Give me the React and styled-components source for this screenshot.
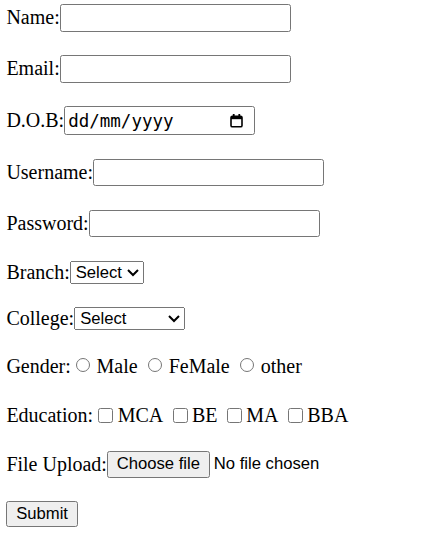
import React from "react";
import styled, { createGlobalStyle } from "styled-components";

const GlobalStyle = createGlobalStyle`
  html, body { margin: 0; padding: 0; background: #fff; }
  body { font-family: "Liberation Serif", "Times New Roman", serif; color: #000; }
`;

const Form = styled.form`
  zoom: 1.25;
  display: flex;
  flex-direction: column;
  align-items: flex-start;
  gap: 18.8px;
  padding: 3.2px 0 0 5.1px;
  font-size: 16px;
`;

const Row = styled.div`
  display: flex;
  align-items: center;
  min-height: ${(p) => p.$minH || 0}px;
  white-space: nowrap;
`;

const Label = styled.span``;

const controlFont = `
  font-family: "Liberation Sans", Arial, sans-serif;
  font-size: 13.333px;
`;

const TextInput = styled.input`
  ${controlFont}
  box-sizing: border-box;
  width: 184.8px;
  height: 22px;
  margin: 0;
  padding: 1px 2px;
  border: 1px solid #767676;
  border-radius: 2px;
  background: #fff;
`;

const DateBox = styled.div`
  box-sizing: border-box;
  width: 152.8px;
  height: 23.2px;
  display: flex;
  align-items: center;
  justify-content: space-between;
  padding: 0 8.4px 0 2.4px;
  border: 1px solid #767676;
  border-radius: 2px;
  background: #fff;
  font-family: "DejaVu Sans Mono", "Liberation Mono", monospace;
  font-size: 14px;
  color: #000;
`;

const CalendarIcon = styled.svg`
  width: 12px;
  height: 12px;
  display: block;
`;

const Select = styled.select`
  ${controlFont}
  margin: 0;
  color: #000;
  ${(p) => (p.$w ? `width: ${p.$w}px;` : "")}
`;

const Choice = styled.label`
  display: inline-flex;
  align-items: center;
  margin-right: ${(p) => p.$after || 0}px;
`;

const Radio = styled.input`
  appearance: none;
  box-sizing: border-box;
  width: 11.4px;
  height: 11.4px;
  margin: 0 5px 3px 4.2px;
  border: 1px solid #767676;
  border-radius: 50%;
  background: #fff;
`;

const Check = styled.input`
  appearance: none;
  box-sizing: border-box;
  width: 12px;
  height: 12px;
  margin: 0 3.5px 0 4.2px;
  border: 1px solid #767676;
  border-radius: 2px;
  background: #fff;
`;

const Button = styled.button`
  ${controlFont}
  margin: 0;
  padding: 0 7px;
  height: ${(p) => p.$h || 20.8}px;
  border: 1px solid #767676;
  border-radius: 2px;
  background: #efefef;
  color: #000;
`;

const FileStatus = styled.span`
  ${controlFont}
  margin-left: 3.2px;
`;

function Calendar() {
  return (
    <CalendarIcon viewBox="0 0 15 15" aria-hidden="true">
      <rect x="2" y="3.2" width="11" height="10.6" rx="1.4" fill="none" stroke="#000" strokeWidth="1.6" />
      <rect x="2" y="3.2" width="11" height="3" fill="#000" />
      <rect x="3.8" y="1" width="1.8" height="3" fill="#000" />
      <rect x="9.4" y="1" width="1.8" height="3" fill="#000" />
    </CalendarIcon>
  );
}

export default function App() {
  return (
    <>
      <GlobalStyle />
      <Form onSubmit={(e) => e.preventDefault()}>
        <Row>
          <Label>Name:</Label>
          <TextInput type="text" />
        </Row>
        <Row>
          <Label>Email:</Label>
          <TextInput type="email" />
        </Row>
        <Row>
          <Label>D.O.B:</Label>
          <DateBox>
            <span>dd/mm/yyyy</span>
            <Calendar />
          </DateBox>
        </Row>
        <Row>
          <Label>Username:</Label>
          <TextInput type="text" />
        </Row>
        <Row>
          <Label>Password:</Label>
          <TextInput type="password" />
        </Row>
        <Row>
          <Label>Branch:</Label>
          <Select defaultValue="">
            <option value="">Select</option>
            <option>CSE</option>
            <option>IT</option>
          </Select>
        </Row>
        <Row>
          <Label>College:</Label>
          <Select $w={88.8} defaultValue="">
            <option value="">Select</option>
            <option>College A</option>
          </Select>
        </Row>
        <Row $minH={20.8}>
          <Label>Gender:</Label>
          <Choice $after={4.2}>
            <Radio type="radio" name="gender" />
            Male
          </Choice>
          <Choice $after={4.2}>
            <Radio type="radio" name="gender" />
            FeMale
          </Choice>
          <Choice>
            <Radio type="radio" name="gender" />
            other
          </Choice>
        </Row>
        <Row $minH={19.2}>
          <Label>Education:</Label>
          <Choice $after={3.3}>
            <Check type="checkbox" />
            MCA
          </Choice>
          <Choice $after={3.3}>
            <Check type="checkbox" />
            BE
          </Choice>
          <Choice $after={3.3}>
            <Check type="checkbox" />
            MA
          </Choice>
          <Choice>
            <Check type="checkbox" />
            BBA
          </Choice>
        </Row>
        <Row>
          <Label>File Upload:</Label>
          <Button type="button" $h={21.6}>Choose file</Button>
          <FileStatus>No file chosen</FileStatus>
        </Row>
        <Row>
          <Button type="submit">Submit</Button>
        </Row>
      </Form>
    </>
  );
}
